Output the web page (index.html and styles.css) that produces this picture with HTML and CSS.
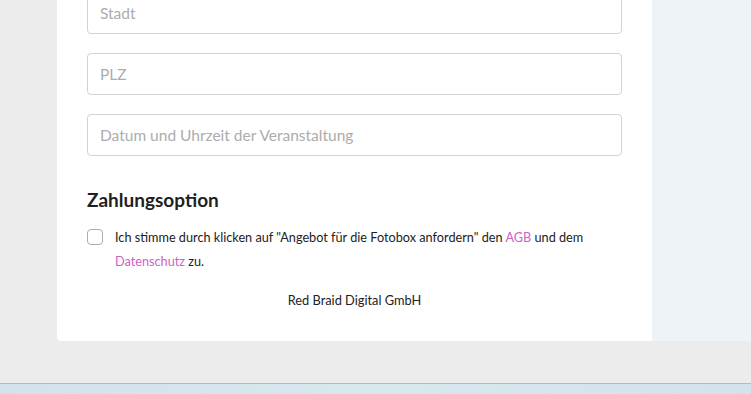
FILE: index.html
```html
<!DOCTYPE html>
<html lang="de">
<head>
  <meta charset="UTF-8">
  <meta name="viewport" content="width=device-width, initial-scale=1.0">
  <title>Angebot für die Fotobox</title>
  <link rel="stylesheet" href="styles.css">
</head>
<body>
  <div class="page">
    <div class="card">
      <form class="form">
        <input class="field" type="text" placeholder="Stadt">
        <input class="field" type="text" placeholder="PLZ">
        <input class="field" type="text" placeholder="Datum und Uhrzeit der Veranstaltung">

        <h2 class="section-title">Zahlungsoption</h2>

        <label class="consent">
          <input type="checkbox" class="consent-box">
          <span class="consent-text">Ich stimme durch klicken auf "Angebot für die Fotobox anfordern" den <a href="#" class="link">AGB</a> und dem <a href="#" class="link">Datenschutz</a> zu.</span>
        </label>

        <div class="company">Red Braid Digital GmbH</div>
      </form>
    </div>
    <div class="side"></div>
  </div>
  <div class="taskbar"></div>
</body>
</html>
```

FILE: styles.css
```css
html, body {
  height: 100%;
}
body {
  font-family: 'Lato', 'Open Sans', sans-serif;
  background-color: #ececec;
  color: #222;
  margin: 0;
  display: flex;
  flex-direction: column;
  overflow: hidden;
}
.page {
  display: flex;
  height: 341px;
  padding-left: 57px;
}
.card {
  width: 595px;
  background-color: #fff;
  border-bottom-left-radius: 4px;
  box-sizing: border-box;
  padding: 0 30px;
}
.side {
  flex: 1;
  background-color: #eef3f7;
}
.form {
  display: flex;
  flex-direction: column;
  margin-top: -8px;
}
.field {
  height: 42px;
  box-sizing: border-box;
  border: 1px solid #d3d3d6;
  border-radius: 4px;
  padding: 0 12px;
  font-family: inherit;
  font-size: 15.5px;
  color: #333;
  margin-bottom: 19px;
  outline: none;
}
.field::placeholder {
  color: #acacac;
}
.section-title {
  font-size: 19px;
  font-weight: 700;
  color: #1f1f1f;
  margin: 13px 0 13px;
  line-height: 24px;
}
.consent {
  display: flex;
  align-items: flex-start;
  font-size: 12.7px;
  line-height: 24px;
}
.consent-box {
  appearance: none;
  width: 16px;
  height: 16px;
  border: 1px solid #a9adb3;
  border-radius: 4px;
  margin: 4px 12px 0 0;
  flex-shrink: 0;
  background: #fff;
}
.consent-text {
  flex: 1;
}
.link {
  color: #cc62c8;
  text-decoration: none;
}
.company {
  text-align: center;
  font-size: 12.8px;
  margin-top: 19px;
}
.taskbar {
  margin-top: auto;
  height: 10px;
  border-top: 1px solid #b3bbbf;
  background: linear-gradient(90deg, #d4e2eb, #d8e8ef 50%, #d4e2eb);
}
```
